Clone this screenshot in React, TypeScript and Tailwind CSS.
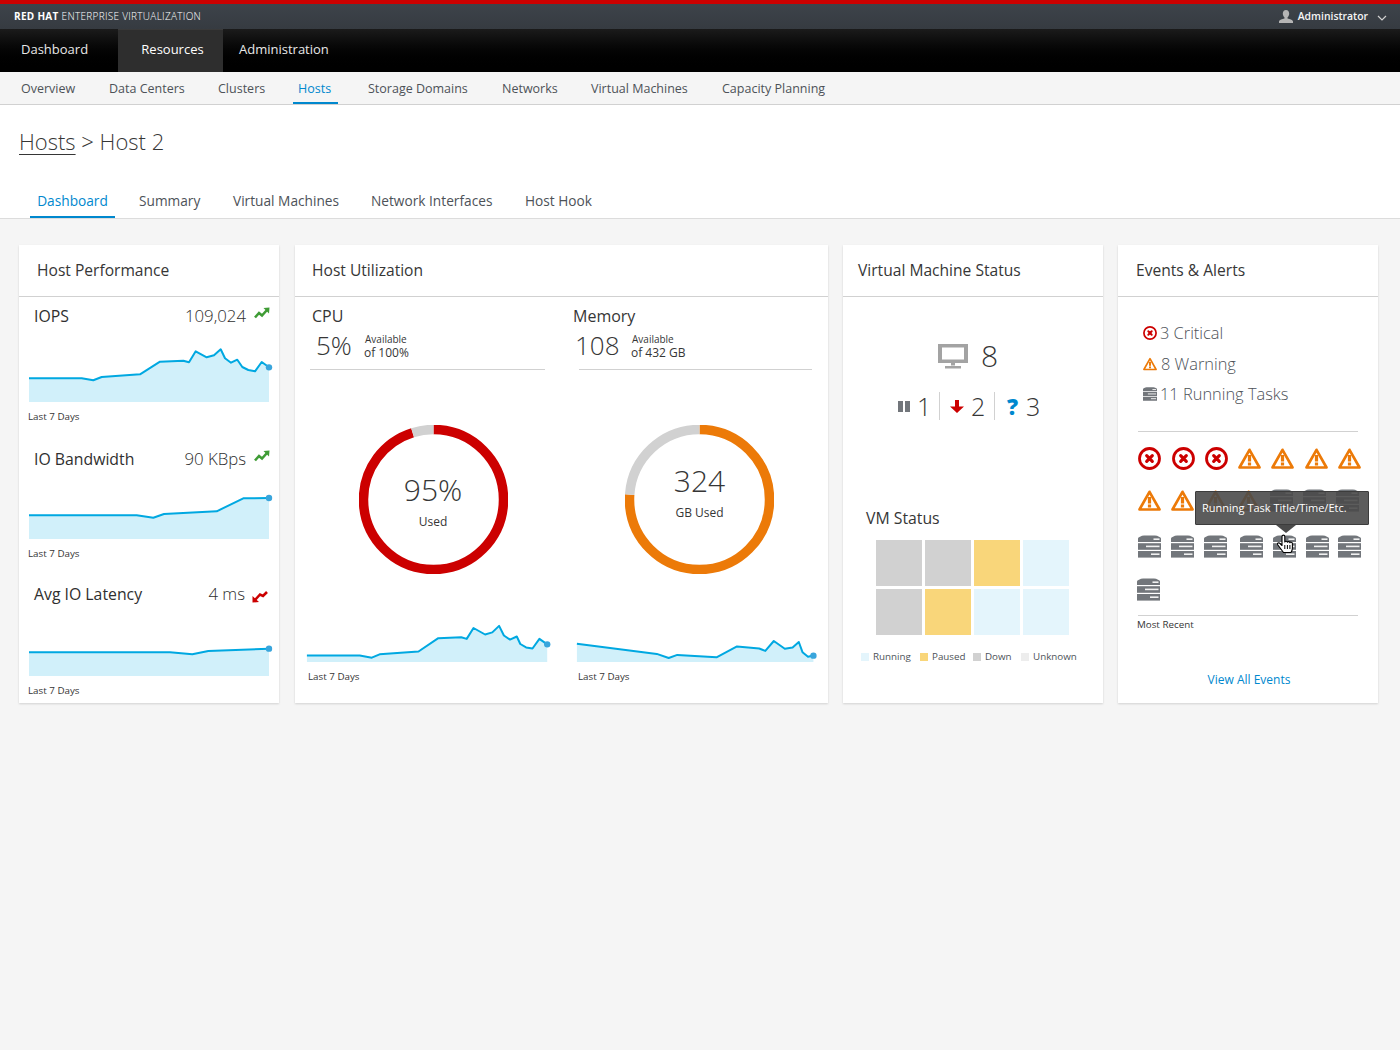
import React from "react";

type P = [number, number];
const map = (pts: P[], s: number, zx: number, zy: number, left: number, top: number): P[] =>
  pts.map(([x, y]) => [zx + x / s - left, zy + y / s - top]);

function Spark({ pts, w, h, dotX }: { pts: P[]; w: number; h: number; dotX?: number }) {
  const line = pts.map((p) => p[0].toFixed(1) + "," + p[1].toFixed(1)).join(" ");
  const last = pts[pts.length - 1];
  const first = pts[0];
  return (
    <svg width={w} height={h} className="block overflow-visible">
      <polygon points={`${first[0]},${h} ${line} ${last[0]},${h}`} fill="#d1f0fa" />
      <polyline points={line} fill="none" stroke="#00a8e1" strokeWidth="2" strokeLinejoin="round" />
      <circle cx={dotX ?? last[0]} cy={last[1]} r="3.2" fill="#39a5dc" />
    </svg>
  );
}

const iops = map(
  [[57,415],[215,415],[250,421],[275,411],[390,403],[450,365],[520,362],[537,367],[557,334],[590,352],[612,346],[632,328],[645,355],[663,368],[682,359],[697,381],[715,390],[735,394],[755,366],[777,382]],
  3, 10, 240, 29, 327
);
const bw = map([[57,106],[380,106],[430,113],[462,102],[620,94],[700,55],[777,54]], 3, 10, 480, 29, 470);
const lat = map([[57,517],[480,517],[547,523],[595,513],[777,506]], 3, 10, 480, 29, 605);
const cpu = map(
  [[35,163],[190,163],[225,169],[248,159],[362,151],[420,112],[487,109],[503,114],[523,82],[557,101],[578,95],[598,76],[612,104],[630,116],[650,107],[660,129],[677,139],[696,142],[716,114],[739,130]],
  2.93, 295, 600, 307, 610
);
const mem = map(
  [[826,128],[1060,158],[1095,170],[1120,161],[1235,168],[1295,136],[1360,142],[1378,149],[1403,120],[1435,143],[1458,139],[1476,123],[1487,153],[1503,166],[1519,163]],
  2.93, 295, 600, 577, 610
);

function TrendUp() {
  return (
    <svg width="16" height="12" viewBox="0 0 16 12" className="block">
      <polyline points="1,10.5 5,6 8,8.5 13,3" fill="none" stroke="#3f9c35" strokeWidth="2.6" />
      <polygon points="9.5,1 15.5,0.5 15,6.5" fill="#3f9c35" />
    </svg>
  );
}
function TrendDown() {
  return (
    <svg width="16" height="12" viewBox="0 0 16 12" className="block">
      <polyline points="15,1 11,5 8,3.5 3,9" fill="none" stroke="#cc0000" strokeWidth="2.6" />
      <polygon points="0.5,5 0.5,11.5 7,11" fill="#cc0000" />
    </svg>
  );
}

function ErrIcon({ size = 23 }: { size?: number }) {
  return (
    <svg width={size} height={size} viewBox="0 0 23 23" className="block shrink-0">
      <circle cx="11.5" cy="11.5" r="10" fill="none" stroke="#cc0000" strokeWidth="2.8" />
      <path d="M8.700 8.700l5.600 5.600M14.300 8.700l-5.600 5.600" stroke="#cc0000" strokeWidth="3.200" strokeLinecap="round" />
    </svg>
  );
}
function WarnIcon({ size = 23 }: { size?: number }) {
  return (
    <svg width={size} height={size} viewBox="0 0 23 23" className="block shrink-0">
      <path d="M11.5 2.800L21.500 20.500H1.500Z" fill="none" stroke="#ec7a08" strokeWidth="2.700" strokeLinejoin="round" />
      <rect x="9.900" y="8" width="3.200" height="6.500" fill="#ec7a08" />
      <rect x="9.900" y="15.500" width="3.200" height="3" fill="#ec7a08" />
    </svg>
  );
}
function ServerIcon({ size = 23 }: { size?: number }) {
  return (
    <svg width={size} height={size} viewBox="0 0 23 23" className="block shrink-0">
      <path d="M0 7V3.500Q0 2.500 2 1.800Q4 0.500 6 0.500H17Q19 0.500 21 1.800Q23 2.500 23 3.500V7Z" fill="#72767b" />
      <rect y="8.200" width="23" height="6.600" fill="#72767b" />
      <rect y="16" width="23" height="6.600" fill="#72767b" />
      <rect x="15.500" y="3.400" width="6" height="1.600" fill="#f1f1f1" />
      <rect x="8" y="10.600" width="13.500" height="1.600" fill="#f1f1f1" />
      <rect x="13" y="18.400" width="8.500" height="1.600" fill="#f1f1f1" />
    </svg>
  );
}

function Metric({
  title, value, down, chart, chartH, gapClass,
}: { title: string; value: string; down?: boolean; chart: P[]; chartH: number; gapClass: string }) {
  return (
    <div className={gapClass}>
      <div className="flex h-[22px] items-center pl-[15px] pr-[9px]">
        <span className="mt-[2px] text-[15.8px] text-[#2f2f2f]">{title}</span>
        <span className="ml-auto text-[16.8px] font-light text-[#2f2f2f]">{value}</span>
        <span className={down ? "ml-[7px] mr-[2px] mt-[5px]" : "ml-[8px] -mt-[6px]"}>{down ? <TrendDown /> : <TrendUp />}</span>
      </div>
      <div className="ml-[10px]">
        <Spark pts={chart} w={240} h={chartH} />
      </div>
      <div className="ml-[9px] mt-[8px] h-[14px] text-[9.8px] leading-[14px] text-[#363636]">Last 7 Days</div>
    </div>
  );
}

function Donut({ parts, big, small, mt, inner }: { parts: { c: string; from: number; to: number }[]; big: string; small: string; mt: string; inner: string }) {
  const r = 70;
  const C = 2 * Math.PI * r;
  return (
    <div className={"relative h-[149px] w-[149px] " + mt}>
      <svg width="149" height="149" className="block -rotate-90">
        {parts.map((p, i) => (
          <circle
            key={i}
            cx="74.5"
            cy="74.5"
            r={r}
            fill="none"
            stroke={p.c}
            strokeWidth="9.5"
            strokeDasharray={`${(p.to - p.from) * C} ${C}`}
            strokeDashoffset={-p.from * C}
          />
        ))}
      </svg>
      <div className={"absolute inset-0 flex flex-col items-center justify-center " + inner}>
        <div className="text-[30px] font-light leading-[40px] text-[#363636]">{big}</div>
        <div className="mt-[4px] text-[12px] leading-[16px] text-[#363636]">{small}</div>
      </div>
    </div>
  );
}

function CardHead({ title, pl }: { title: string; pl: string }) {
  return (
    <div className={"flex h-[52px] items-center border-b border-[#d1d1d1] text-[15.6px] text-[#363636] " + pl}>{title}</div>
  );
}

const card = "h-[458px] shrink-0 bg-white shadow-[0_1px_2px_rgba(0,0,0,0.15)]";

const row1 = [
  { k: "e", c: "" }, { k: "e", c: "ml-[11px]" }, { k: "e", c: "ml-[10px]" }, { k: "w", c: "ml-[10px]" },
  { k: "w", c: "ml-[10px]" }, { k: "w", c: "ml-[11px]" }, { k: "w", c: "ml-[10px]" },
];
const row2 = [
  { k: "w", c: "" }, { k: "w", c: "ml-[10px]" }, { k: "w", c: "ml-[10px]" }, { k: "w", c: "ml-[10px]" },
  { k: "s", c: "ml-[10px]" }, { k: "s", c: "ml-[10px]" }, { k: "s", c: "ml-[10px]" },
];
const row3 = [
  { k: "s", c: "" }, { k: "s", c: "ml-[10px]" }, { k: "s", c: "ml-[10px]" }, { k: "s", c: "ml-[13px]" },
  { k: "s", c: "ml-[10px]" }, { k: "s", c: "ml-[10px]" }, { k: "s", c: "ml-[9px]" },
];

function IconRow({ items, cls }: { items: { k: string; c: string }[]; cls: string }) {
  return (
    <div className={"flex h-[24px] items-center " + cls}>
      {items.map((it, i) => (
        <span key={i} className={it.c}>
          {it.k === "e" ? <ErrIcon /> : it.k === "w" ? <WarnIcon /> : <ServerIcon />}
        </span>
      ))}
    </div>
  );
}

const tile = "h-[46px] w-[46px]";

export default function App() {
  return (
    <div className="min-h-[1050px] bg-[#f5f5f5] font-['Open_Sans',sans-serif]">
      {/* Top bars */}
      <div className="h-[4px] bg-[#cc0000]" />
      <div className="flex h-[25px] items-center bg-linear-to-b from-[#3d434a] to-[#363b41] pl-[14px] pr-[13px] text-white">
        <span className="text-[10px] tracking-[0.3px]">
          <b className="font-bold">RED HAT</b> <span className="font-light">ENTERPRISE VIRTUALIZATION</span>
        </span>
        <svg width="14" height="14" viewBox="0 0 14 14" className="ml-auto">
          <path d="M7 0c2 0 3.200 1.500 3.200 3.600 0 1.600-.8 3.100-1.700 3.800v1.200c2.400.7 5 1.200 5.500 2.600V13H0v-1.800c.5-1.400 3.100-1.900 5.500-2.600V7.400C4.600 6.700 3.800 5.200 3.800 3.600 3.800 1.500 5 0 7 0z" fill="#b5b5b5" />
        </svg>
        <span className="ml-[5px] text-[10.4px] font-semibold text-[#f5f5f5]">Administrator</span>
        <svg width="10" height="6" viewBox="0 0 10 6" className="ml-[9px] mt-[2px]">
          <path d="M1 1l4 4 4-4" fill="none" stroke="#d1d1d1" strokeWidth="1.200" />
        </svg>
      </div>
      <div className="flex h-[43px] items-stretch bg-linear-to-b from-[#1b1b1b] to-black pb-[2px] text-[13px] text-[#e8e8e8]">
        <div className="flex w-[118px] items-center pl-[21px]">Dashboard</div>
        <div className="-mb-[2px] flex w-[105px] items-center justify-center border-t border-[#3a3a3a] bg-[#2e2e2e] pb-[2px] pl-[4px] font-medium text-white">Resources</div>
        <div className="flex items-center pl-[16px]">Administration</div>
      </div>
      <div className="flex h-[33px] items-stretch border-b border-[#d1d1d1] bg-[#f5f5f5] pl-[21px] text-[12.5px] text-[#4d5258]">
        <div className="flex w-[88px] items-center pt-[2px]">Overview</div>
        <div className="flex w-[109px] items-center pt-[2px]">Data Centers</div>
        <div className="flex w-[75px] items-center pt-[2px]">Clusters</div>
        <div className="flex w-[45px] items-center border-b-[2px] border-[#0088ce] pl-[5px] pt-[4px] text-[#0088ce]">Hosts</div>
        <div className="ml-[30px] flex w-[134px] items-center pt-[2px]">Storage Domains</div>
        <div className="flex w-[89px] items-center pt-[2px]">Networks</div>
        <div className="flex w-[131px] items-center pt-[2px]">Virtual Machines</div>
        <div className="flex items-center pt-[2px]">Capacity Planning</div>
      </div>

      {/* Page head */}
      <div className="h-[114px] border-b border-[#dcdcdc] bg-white">
        <div className="h-[76px] pl-[19px] pt-[20px] text-[22px] font-light leading-[32px] text-[#363636]">
          <span className="underline decoration-1 underline-offset-[4px]">Hosts</span> &gt; Host 2
        </div>
        <div className="flex h-[37px] items-stretch pl-[30px] text-[13.7px] text-[#4d5258]">
          <div className="flex w-[85px] items-center justify-center border-b-[2px] border-[#0088ce] pt-[5px] text-[#0088ce]">Dashboard</div>
          <div className="flex w-[118px] items-center pl-[24px] pt-[3px]">Summary</div>
          <div className="flex w-[138px] items-center pt-[3px]">Virtual Machines</div>
          <div className="flex w-[154px] items-center pt-[3px]">Network Interfaces</div>
          <div className="flex items-center pt-[3px]">Host Hook</div>
        </div>
      </div>

      {/* Cards */}
      <div className="flex items-start pl-[19px] pt-[26px]">
        {/* Host Performance */}
        <div className={card + " w-[260px]"}>
          <CardHead title="Host Performance" pl="pl-[18px]" />
          <Metric title="IOPS" value="109,024" chart={iops} chartH={75} gapClass="pt-[8px]" />
          <Metric title="IO Bandwidth" value="90 KBps" chart={bw} chartH={69} gapClass="pt-[24px]" />
          <Metric title="Avg IO Latency" value="4 ms" down chart={lat} chartH={71} gapClass="pt-[22px]" />
        </div>

        {/* Host Utilization */}
        <div className={card + " ml-[16px] w-[533px]"}>
          <CardHead title="Host Utilization" pl="pl-[17px]" />
          <div className="flex">
            <div className="w-[265px]">
              <div className="ml-[17px] mt-[8px] h-[22px] text-[16px] leading-[22px] text-[#363636]">CPU</div>
              <div className="ml-[15px] mr-[15px] flex h-[43px] items-center border-b border-[#d1d1d1] pb-[5px] pl-[6px]">
                <span className="-mt-[2px] w-[48px] text-[26px] font-light leading-[34px] text-[#363636]">5%</span>
                <span className="text-[#363636]">
                  <span className="block pl-px text-[10px] leading-[14px]">Available</span>
                  <span className="block text-[12px] leading-[14px]">of 100%</span>
                </span>
              </div>
              <div className="flex justify-center">
                <Donut big="95%" small="Used" inner="" mt="mt-[55px] ml-[11px]" parts={[{ c: "#cc0000", from: 0, to: 0.95 }, { c: "#d1d1d1", from: 0.95, to: 1 }]} />
              </div>
              <div className="ml-[12px] mt-[36px]">
                <Spark pts={cpu} w={240} h={52} />
              </div>
              <div className="ml-[13px] mt-[8px] h-[14px] text-[9.8px] leading-[14px] text-[#363636]">Last 7 Days</div>
            </div>
            <div className="w-[268px]">
              <div className="ml-[13px] mt-[8px] h-[22px] text-[16px] leading-[22px] text-[#363636]">Memory</div>
              <div className="ml-[19px] mr-[16px] flex h-[43px] items-center border-b border-[#d1d1d1] pb-[5px]">
                <span className="-ml-[4px] -mt-[2px] w-[56px] text-[26px] font-light leading-[34px] text-[#363636]">108</span>
                <span className="text-[#363636]">
                  <span className="block pl-px text-[10px] leading-[14px]">Available</span>
                  <span className="block text-[12px] leading-[14px]">of 432 GB</span>
                </span>
              </div>
              <div className="ml-[65px]">
                <Donut big="324" small="GB Used" inner="pb-[18px]" mt="mt-[55px]" parts={[{ c: "#ec7a08", from: 0, to: 0.76 }, { c: "#d1d1d1", from: 0.76, to: 1 }]} />
              </div>
              <div className="ml-[17px] mt-[36px]">
                <Spark pts={mem} w={240} h={52} />
              </div>
              <div className="ml-[18px] mt-[8px] h-[14px] text-[9.8px] leading-[14px] text-[#363636]">Last 7 Days</div>
            </div>
          </div>
        </div>

        {/* VM status */}
        <div className={card + " ml-[15px] w-[260px]"}>
          <CardHead title="Virtual Machine Status" pl="pl-[15px]" />
          <div className="ml-[95px] mt-[41px] flex h-[36px] items-center">
            <svg width="30" height="25" viewBox="0 0 30 25" className="block">
              <path d="M0 0h30v19H0z" fill="#a3a3a3" />
              <path d="M4 3.500h22v12H4z" fill="#fff" />
              <path d="M13 19h4v2.500h-4z" fill="#a3a3a3" />
              <path d="M7 22h16v2.500H7z" fill="#a3a3a3" />
            </svg>
            <span className="ml-[13px] text-[30px] font-light leading-[36px] text-[#363636]">8</span>
          </div>
          <div className="ml-[55px] mt-[18px] flex h-[28px] items-center text-[25px] font-light text-[#363636]">
            <svg width="12" height="11" viewBox="0 0 12 11" className="block"><path d="M0 0h5v11H0zM7 0h5v11H7z" fill="#72767b" /></svg>
            <span className="ml-[7px] w-[22px] leading-[28px]">1</span>
            <span className="h-[28px] w-px bg-[#d1d1d1]" />
            <svg width="14" height="13" viewBox="0 0 14 13" className="ml-[10px] block"><path d="M5 0h4v6.500h5L7 13 0 6.500h5z" fill="#cc0000" /></svg>
            <span className="ml-[7px] w-[23px] leading-[28px]">2</span>
            <span className="h-[28px] w-px bg-[#d1d1d1]" />
            <span className="ml-[12px] w-[19px] text-[22px] font-extrabold leading-[28px] text-[#0088ce]">?</span>
            <span className="leading-[28px]">3</span>
          </div>
          <div className="ml-[23px] mt-[87px] h-[22px] text-[15.8px] leading-[22px] text-[#363636]">VM Status</div>
          <div className="ml-[33px] mt-[11px] grid w-[193px] grid-cols-4 gap-[3px]">
            <div className={tile + " bg-[#d1d1d1]"} />
            <div className={tile + " bg-[#d1d1d1]"} />
            <div className={tile + " bg-[#f9d67a]"} />
            <div className={tile + " bg-[#e4f5fc]"} />
            <div className={tile + " bg-[#d1d1d1]"} />
            <div className={tile + " bg-[#f9d67a]"} />
            <div className={tile + " bg-[#e4f5fc]"} />
            <div className={tile + " bg-[#e4f5fc]"} />
          </div>
          <div className="ml-[18px] mt-[15px] flex h-[14px] items-center text-[9.8px] text-[#4d5258]">
            <span className="h-[8px] w-[8px] bg-[#e4f5fc]" />
            <span className="ml-[4px] w-[47px]">Running</span>
            <span className="h-[8px] w-[8px] bg-[#f9d67a]" />
            <span className="ml-[4px] w-[41px]">Paused</span>
            <span className="h-[8px] w-[8px] bg-[#d1d1d1]" />
            <span className="ml-[4px] w-[36px]">Down</span>
            <span className="h-[8px] w-[8px] bg-[#ededed]" />
            <span className="ml-[4px]">Unknown</span>
          </div>
        </div>

        {/* Events */}
        <div className={card + " ml-[15px] w-[260px]"}>
          <CardHead title="Events & Alerts" pl="pl-[18px]" />
          <div className="ml-[25px] mt-[25px] flex h-[22px] items-center text-[16.4px] font-light text-[#4d5258]">
            <ErrIcon size={14} /><span className="ml-[3px]">3 Critical</span>
          </div>
          <div className="ml-[25px] mt-[9px] flex h-[22px] items-center text-[16.4px] font-light text-[#4d5258]">
            <WarnIcon size={14} /><span className="ml-[4px]">8 Warning</span>
          </div>
          <div className="ml-[25px] mt-[8px] flex h-[22px] items-center text-[16.4px] font-light text-[#4d5258]">
            <ServerIcon size={14} /><span className="ml-[3px]">11 Running Tasks</span>
          </div>
          <div className="mx-[20px] mt-[26px] border-t border-[#d1d1d1]" />
          <div className="relative ml-[20px] mt-[14px]">
            <IconRow items={row1} cls="" />
            <IconRow items={row2} cls="mt-[18px]" />
            <IconRow items={row3} cls="mt-[22px]" />
            <IconRow items={[{ k: "s", c: "" }]} cls="mt-[19px] -ml-px" />
            <div className="absolute left-[57px] top-[45px] flex h-[34px] w-[174px] items-center rounded-[1px] border border-[#3c3c3c] bg-[#4a4a4a]/90 pl-[6px] text-[11px] text-white">
              Running Task Title/Time/Etc.
              <span className="absolute left-[80px] top-[33px] h-0 w-0 border-x-[10px] border-t-[8px] border-x-transparent border-t-[#4a4a4a]" />
            </div>
            <svg width="18" height="20" viewBox="0 0 18 20" className="absolute left-[139px] top-[88px]">
              <path d="M5 2.500c0-1.800 2.800-1.800 2.800 0V8c0-1 2.600-1 2.600.3 0-1 2.500-1 2.500.4 0-.8 2.500-.8 2.500.7v4.600c0 2.500-1.500 4.500-1.500 4.500H6.500S5 16.500 3.500 14.500 .5 10.500 .5 10.500c-.5-1.500 1.500-2.200 2.500-1L5 11.500z" fill="#fff" stroke="#000" strokeWidth="1.100" strokeLinejoin="round" />
              <path d="M7.800 11v4M10.400 11v4M12.900 11v4" stroke="#000" strokeWidth="1" />
            </svg>
          </div>
          <div className="mx-[20px] mt-[14px] border-t border-[#d1d1d1]" />
          <div className="ml-[19px] mt-[2px] h-[14px] text-[9.8px] leading-[14px] text-[#363636]">Most Recent</div>
          <div className="mt-[39px] pl-[2px] text-center text-[12px] leading-[18px] text-[#0088ce]">View All Events</div>
        </div>
      </div>
    </div>
  );
}
